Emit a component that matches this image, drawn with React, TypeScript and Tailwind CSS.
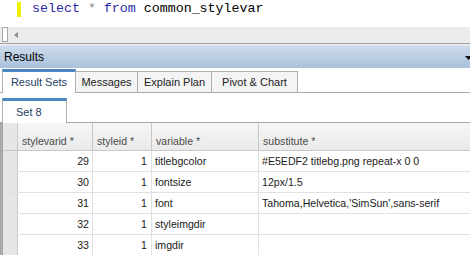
const rows = [
  { id: 29, styleid: 1, variable: "titlebgcolor", substitute: "#E5EDF2 titlebg.png repeat-x 0 0" },
  { id: 30, styleid: 1, variable: "fontsize", substitute: "12px/1.5" },
  { id: 31, styleid: 1, variable: "font", substitute: "Tahoma,Helvetica,'SimSun',sans-serif" },
  { id: 32, styleid: 1, variable: "styleimgdir", substitute: "" },
  { id: 33, styleid: 1, variable: "imgdir", substitute: "" },
];

const tabs = [
  { label: "Result Sets", w: "w-[74px]", active: true },
  { label: "Messages", w: "w-[62px]", active: false },
  { label: "Explain Plan", w: "w-[74px]", active: false },
  { label: "Pivot & Chart", w: "w-[86px]", active: false },
];

const App = () => {
  return (
    <div className="w-[470px] h-[255px] overflow-hidden bg-white flex flex-col font-['Liberation_Sans',Arial,sans-serif] text-[10.6px] text-[#1a1a1a]">
      {/* sql editor */}
      <div className="h-[27px] shrink-0 flex items-start pt-[2px]">
        <span className="ml-[17px] w-[4px] h-[15px] bg-[#f0f000]" />
        <pre className="ml-[11px] -mt-[1px] font-['Liberation_Mono','Courier_New',monospace] text-[13.3px] leading-[16px]">
          <span className="text-[#2a2aa8]">select</span>{" "}
          <span className="text-[#8a8a8a]">*</span>{" "}
          <span className="text-[#2a2aa8]">from</span>{" "}
          <span className="text-black">common_stylevar</span>
        </pre>
      </div>

      {/* horizontal scrollbar */}
      <div className="h-[16px] shrink-0 bg-[#ececec] flex items-start">
        <span className="ml-[2px] w-[6px] h-[15px] bg-white border border-[#a6a6a6]" />
        <svg className="ml-[6px] mt-[5px]" width="4" height="6" viewBox="0 0 4 6">
          <path d="M4 0 L0 3 L4 6 Z" fill="#8c8c8c" />
        </svg>
      </div>
      <div className="h-px shrink-0 bg-[#a3a3a3]" />
      <div className="h-px shrink-0 bg-[#ededed]" />

      {/* Results bar */}
      <div className="h-[23px] shrink-0 flex items-center justify-between bg-gradient-to-b from-[#cddcec] to-[#a9c1db] border-t border-[#dfe8f2]">
        <span className="pl-[4px] text-[12px] text-black">Results</span>
        <svg className="-mr-[2px] mt-[2px]" width="7" height="4" viewBox="0 0 7 4">
          <path d="M0 0 L7 0 L3.5 4 Z" fill="#111" />
        </svg>
      </div>

      {/* result tabs */}
      <div className="h-[25px] shrink-0 flex items-end border-b border-[#a8a8a8] pl-[2px]">
        {tabs.map((t) =>
          t.active ? (
            <div
              key={t.label}
              className={`${t.w} h-[24px] -mb-px bg-white border-x border-[#b0b0b0] border-t-[3px] border-t-[#4a86bf] flex items-center justify-center text-[#1e3f66] text-[11px]`}
            >
              {t.label}
            </div>
          ) : (
            <div
              key={t.label}
              className={`${t.w} h-[21px] bg-[#f4f4f4] border-t border-r border-[#b0b0b0] flex items-center justify-center text-[#222] text-[11px]`}
            >
              {t.label}
            </div>
          )
        )}
      </div>

      <div className="h-[4px] shrink-0" />

      {/* set tab */}
      <div className="h-[26px] shrink-0 flex items-end border-b border-[#a8a8a8] pl-[2px]">
        <div className="w-[65px] h-[25px] -mb-px bg-white border-x border-[#b0b0b0] border-t-[3px] border-t-[#4a86bf] flex items-center pl-[13px] text-[#1e3f66] text-[11px]">
          Set 8
        </div>
      </div>

      {/* grid */}
      <div className="flex-1 flex border-l-[3px] border-[#a9a9a9]">
        <div className="w-full">
          <div className="h-[28px] flex bg-gradient-to-b from-[#f6f6f6] to-[#eaeaea] border-b border-[#c8c8c8] text-[#4a4a4a]">
            <div className="w-[15px] shrink-0 border-r border-[#c8c8c8] bg-[#e6e6e6]" />
            <div className="w-[75px] shrink-0 border-r border-[#c8c8c8] pl-[4px] pt-[11px]">stylevarid *</div>
            <div className="w-[59px] shrink-0 border-r border-[#c8c8c8] pl-[4px] pt-[11px]">styleid *</div>
            <div className="w-[107px] shrink-0 border-r border-[#c8c8c8] pl-[4px] pt-[11px]">variable *</div>
            <div className="flex-1 pl-[4px] pt-[11px]">substitute *</div>
          </div>
          {rows.map((r) => (
            <div key={r.id} className="h-[21px] flex border-b border-[#e1e1e1] leading-[20px]">
              <div className="w-[15px] shrink-0 border-r border-[#c8c8c8] bg-[#e6e6e6]" />
              <div className="w-[75px] shrink-0 border-r border-[#e1e1e1] text-right pr-[3px]">{r.id}</div>
              <div className="w-[59px] shrink-0 border-r border-[#e1e1e1] text-right pr-[4px]">{r.styleid}</div>
              <div className="w-[107px] shrink-0 border-r border-[#e1e1e1] pl-[3px]">{r.variable}</div>
              <div className="flex-1 pl-[3px] whitespace-nowrap">{r.substitute}</div>
            </div>
          ))}
        </div>
      </div>
    </div>
  );
};

export default App;
